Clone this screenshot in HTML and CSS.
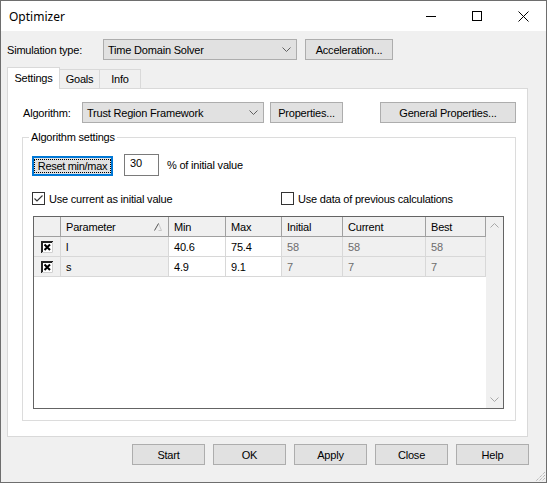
FILE: index.html
```html
<!DOCTYPE html>
<html lang="en">
<head>
  <meta charset="UTF-8" />
  <title>Optimizer</title>
  <link rel="stylesheet" href="styles.css">
</head>
<body>
  <div class="window">
    <!-- Title bar -->
    <div class="titlebar">
      <span class="title">Optimizer</span>
      <div class="caption-btn"><svg width="10" height="10"><path d="M0 5.5h10" stroke="#000"/></svg></div>
      <div class="caption-btn"><svg width="10" height="10"><rect x="0.5" y="0.5" width="9" height="9" fill="none" stroke="#000"/></svg></div>
      <div class="caption-btn"><svg width="11" height="11"><path d="M0.5 0.5L10.5 10.5M10.5 0.5L0.5 10.5" stroke="#000"/></svg></div>
    </div>

    <div class="client">
      <div class="sim-row">
        <span class="sim-label">Simulation type:</span>
        <div class="combo sim">
          <span>Time Domain Solver</span>
          <svg width="9" height="5"><path d="M0.5 0.5L4.5 4.5L8.5 0.5" fill="none" stroke="#606060"/></svg>
        </div>
        <div class="btn accel">Acceleration...</div>
      </div>

      <!-- Tabs -->
      <div class="tab-strip">
        <div class="tab active">Settings</div>
        <div class="tab goals">Goals</div>
        <div class="tab info">Info</div>
      </div>
      <div class="panel">
        <div class="alg-row">
          <span class="alg-label">Algorithm:</span>
          <div class="combo alg">
            <span>Trust Region Framework</span>
            <svg width="9" height="5"><path d="M0.5 0.5L4.5 4.5L8.5 0.5" fill="none" stroke="#606060"/></svg>
          </div>
          <div class="btn props">Properties...</div>
          <div class="btn general">General Properties...</div>
        </div>

        <fieldset class="group">
          <legend>Algorithm settings</legend>
          <div class="reset-row">
            <div class="btn reset"><span class="focus">Reset min/max</span></div>
            <div class="field">30</div>
            <span class="pct">% of initial value</span>
          </div>

          <div class="check-row">
            <div class="check-item first">
              <svg class="check" width="13" height="13"><rect x="0.5" y="0.5" width="12" height="12" fill="#fff" stroke="#333"/><path d="M2.5 6.5L5 9L10.5 3.5" fill="none" stroke="#333" stroke-width="1.1"/></svg>
              <span>Use current as initial value</span>
            </div>
            <div class="check-item">
              <svg class="check" width="13" height="13"><rect x="0.5" y="0.5" width="12" height="12" fill="#fff" stroke="#333"/></svg>
              <span>Use data of previous calculations</span>
            </div>
          </div>

          <div class="grid">
            <div class="table">
              <div class="cell hd"></div>
              <div class="cell hd sort">
                <span>Parameter</span>
                <svg width="8" height="8"><path d="M4.5 7.5H7.5L4.5 0.5" fill="none" stroke="#c8c8c8"/><path d="M0.5 7.5L4.5 0.5" stroke="#555"/></svg>
              </div>
              <div class="cell hd">Min</div>
              <div class="cell hd">Max</div>
              <div class="cell hd">Initial</div>
              <div class="cell hd">Current</div>
              <div class="cell hd">Best</div>

              <div class="cell rowhd"><svg width="12" height="12"><rect x="0" y="0" width="12" height="12" fill="#fff"/><path d="M1 12V1H12" fill="none" stroke="#222" stroke-width="2"/><path d="M11.5 1V11.5H1" fill="none" stroke="#d0d0d0"/><path d="M3.5 3.5L9 9M9 3.5L3.5 9" stroke="#000" stroke-width="2"/></svg></div>
              <div class="cell">l</div>
              <div class="cell edit">40.6</div>
              <div class="cell edit">75.4</div>
              <div class="cell ro">58</div>
              <div class="cell ro">58</div>
              <div class="cell ro">58</div>

              <div class="cell rowhd"><svg width="12" height="12"><rect x="0" y="0" width="12" height="12" fill="#fff"/><path d="M1 12V1H12" fill="none" stroke="#222" stroke-width="2"/><path d="M11.5 1V11.5H1" fill="none" stroke="#d0d0d0"/><path d="M3.5 3.5L9 9M9 3.5L3.5 9" stroke="#000" stroke-width="2"/></svg></div>
              <div class="cell">s</div>
              <div class="cell edit">4.9</div>
              <div class="cell edit">9.1</div>
              <div class="cell ro">7</div>
              <div class="cell ro">7</div>
              <div class="cell ro">7</div>
            </div>
            <div class="vscroll">
              <svg width="9" height="5"><path d="M0.5 4.5L4.5 0.5L8.5 4.5" fill="none" stroke="#a8a8a8"/></svg>
              <svg width="9" height="5"><path d="M0.5 0.5L4.5 4.5L8.5 0.5" fill="none" stroke="#a8a8a8"/></svg>
            </div>
          </div>
        </fieldset>
      </div>

      <div class="footer">
        <div class="btn foot">Start</div>
        <div class="btn foot">OK</div>
        <div class="btn foot">Apply</div>
        <div class="btn foot">Close</div>
        <div class="btn foot">Help</div>
      </div>
    </div>

    <!-- resize grip -->
    <svg class="grip" width="11" height="11"><path d="M10 1L1 10M10 4L4 10M10 7L7 10" stroke="#a0a0a0" stroke-dasharray="1 1"/></svg>
  </div>
</body>
</html>
```

FILE: styles.css
```css
body {
  margin: 0;
  font-family: "Liberation Sans", Arial, sans-serif;
  font-size: 11px;
  letter-spacing: -0.2px;
  color: #000;
  background: #fff;
}
.window {
  position: relative;
  width: 547px;
  height: 483px;
  box-sizing: border-box;
  border: 1px solid #6e6e6e;
  background: #f0f0f0;
  display: flex;
  flex-direction: column;
  white-space: nowrap;
}
.titlebar {
  height: 30px;
  flex-shrink: 0;
  background: #fff;
  display: flex;
  align-items: center;
}
.title {
  flex: 1;
  padding-left: 8px;
  font-family: "Noto Sans", sans-serif;
  font-size: 12px;
  letter-spacing: 0;
}
.caption-btn {
  width: 46px;
  height: 30px;
  display: flex;
  align-items: center;
  justify-content: center;
}
.client {
  flex: 1;
  display: flex;
  flex-direction: column;
  padding: 8px 0 0 6px;
}
.sim-row {
  display: flex;
  align-items: center;
  height: 21px;
}
.sim-label {
  width: 96px;
}
.combo {
  height: 21px;
  box-sizing: border-box;
  border: 1px solid #adadad;
  background: #e1e1e1;
  display: flex;
  align-items: center;
  justify-content: space-between;
  padding: 0 5px 0 4px;
}
.combo.sim {
  width: 194px;
}
.btn {
  height: 21px;
  box-sizing: border-box;
  border: 1px solid #adadad;
  background: #e1e1e1;
  display: flex;
  align-items: center;
  justify-content: center;
}
.btn.accel {
  width: 88px;
  margin-left: 8px;
}
.tab-strip {
  display: flex;
  align-items: flex-end;
  height: 21px;
  margin-top: 7px;
}
.tab {
  height: 19px;
  box-sizing: border-box;
  border: 1px solid #d9d9d9;
  border-bottom: none;
  background: #f0f0f0;
  display: flex;
  align-items: center;
  justify-content: center;
}
.tab.active {
  position: relative;
  z-index: 1;
  width: 53px;
  height: 22px;
  margin-bottom: -1px;
  padding-bottom: 2px;
  background: #fff;
}
.tab.goals {
  width: 40px;
  border-left: none;
}
.tab.info {
  width: 41px;
  border-left: none;
}
.panel {
  width: 521px;
  height: 349px;
  box-sizing: border-box;
  border: 1px solid #d9d9d9;
  background: #fff;
  padding: 13px 0 0 14px;
}
.alg-row {
  display: flex;
  align-items: center;
  height: 21px;
  padding-left: 1px;
}
.alg-label {
  width: 59px;
}
.combo.alg {
  width: 182px;
}
.btn.props {
  width: 73px;
  margin-left: 6px;
}
.btn.general {
  width: 136px;
  margin-left: 37px;
}
.group {
  width: 494px;
  box-sizing: border-box;
  margin: 8px 0 0 0;
  padding: 0 0 11px 0;
  border: 1px solid #dcdcdc;
  min-inline-size: 0;
}
.group legend {
  margin-left: 6px;
  padding: 0 2px;
  line-height: 13px;
}
.reset-row {
  display: flex;
  align-items: flex-end;
  margin: 10px 0 0 9px;
}
.btn.reset {
  width: 81px;
  height: 20px;
  border-color: #0078d7;
  box-shadow: inset 0 0 0 1px #0078d7;
  padding: 2px 1px;
}
.btn.reset .focus {
  flex: 1;
  align-self: stretch;
  border: 1px dotted #000;
  display: flex;
  align-items: center;
  justify-content: center;
  letter-spacing: -0.3px;
}
.field {
  width: 35px;
  height: 22px;
  box-sizing: border-box;
  margin-left: 11px;
  border: 1px solid #7a7a7a;
  background: #fff;
  padding: 2px 0 0 5px;
  line-height: 13px;
}
.pct {
  margin-left: 8px;
  align-self: center;
}
.check-row {
  display: flex;
  align-items: center;
  height: 13px;
  margin: 16px 0 0 9px;
}
.check-item {
  display: flex;
  align-items: center;
  gap: 4px;
}
.check-item.first {
  width: 249px;
}
.grid {
  width: 471px;
  height: 193px;
  box-sizing: border-box;
  margin: 11px 0 0 10px;
  border: 1px solid #646464;
  background: #fff;
  display: flex;
}
.table {
  width: 452px;
  display: grid;
  grid-template-columns: 27px 108px 57px 56px 61px 83px 60px;
  grid-auto-rows: 20px;
  align-content: start;
}
.cell {
  box-sizing: border-box;
  border-right: 1px solid #d8d8d8;
  border-bottom: 1px solid #d8d8d8;
  background: #f0f0f0;
  padding-left: 5px;
  display: flex;
  align-items: center;
}
.cell.hd {
  border-right-color: #a0a0a0;
  border-bottom-color: #a0a0a0;
}
.cell.sort {
  justify-content: space-between;
  padding-right: 6px;
}
.cell.rowhd {
  padding-left: 0;
  justify-content: center;
}
.cell.edit {
  background: #fff;
}
.cell.ro {
  color: #6d6d6d;
}
.vscroll {
  width: 17px;
  background: #f0f0f0;
  display: flex;
  flex-direction: column;
  justify-content: space-between;
  align-items: center;
  padding: 6px 0;
  box-sizing: border-box;
}
.footer {
  display: flex;
  justify-content: flex-end;
  gap: 8px;
  padding-right: 17px;
  margin-top: 7px;
}
.btn.foot {
  width: 73px;
}
.grip {
  position: absolute;
  right: 0;
  bottom: 0;
}
```
